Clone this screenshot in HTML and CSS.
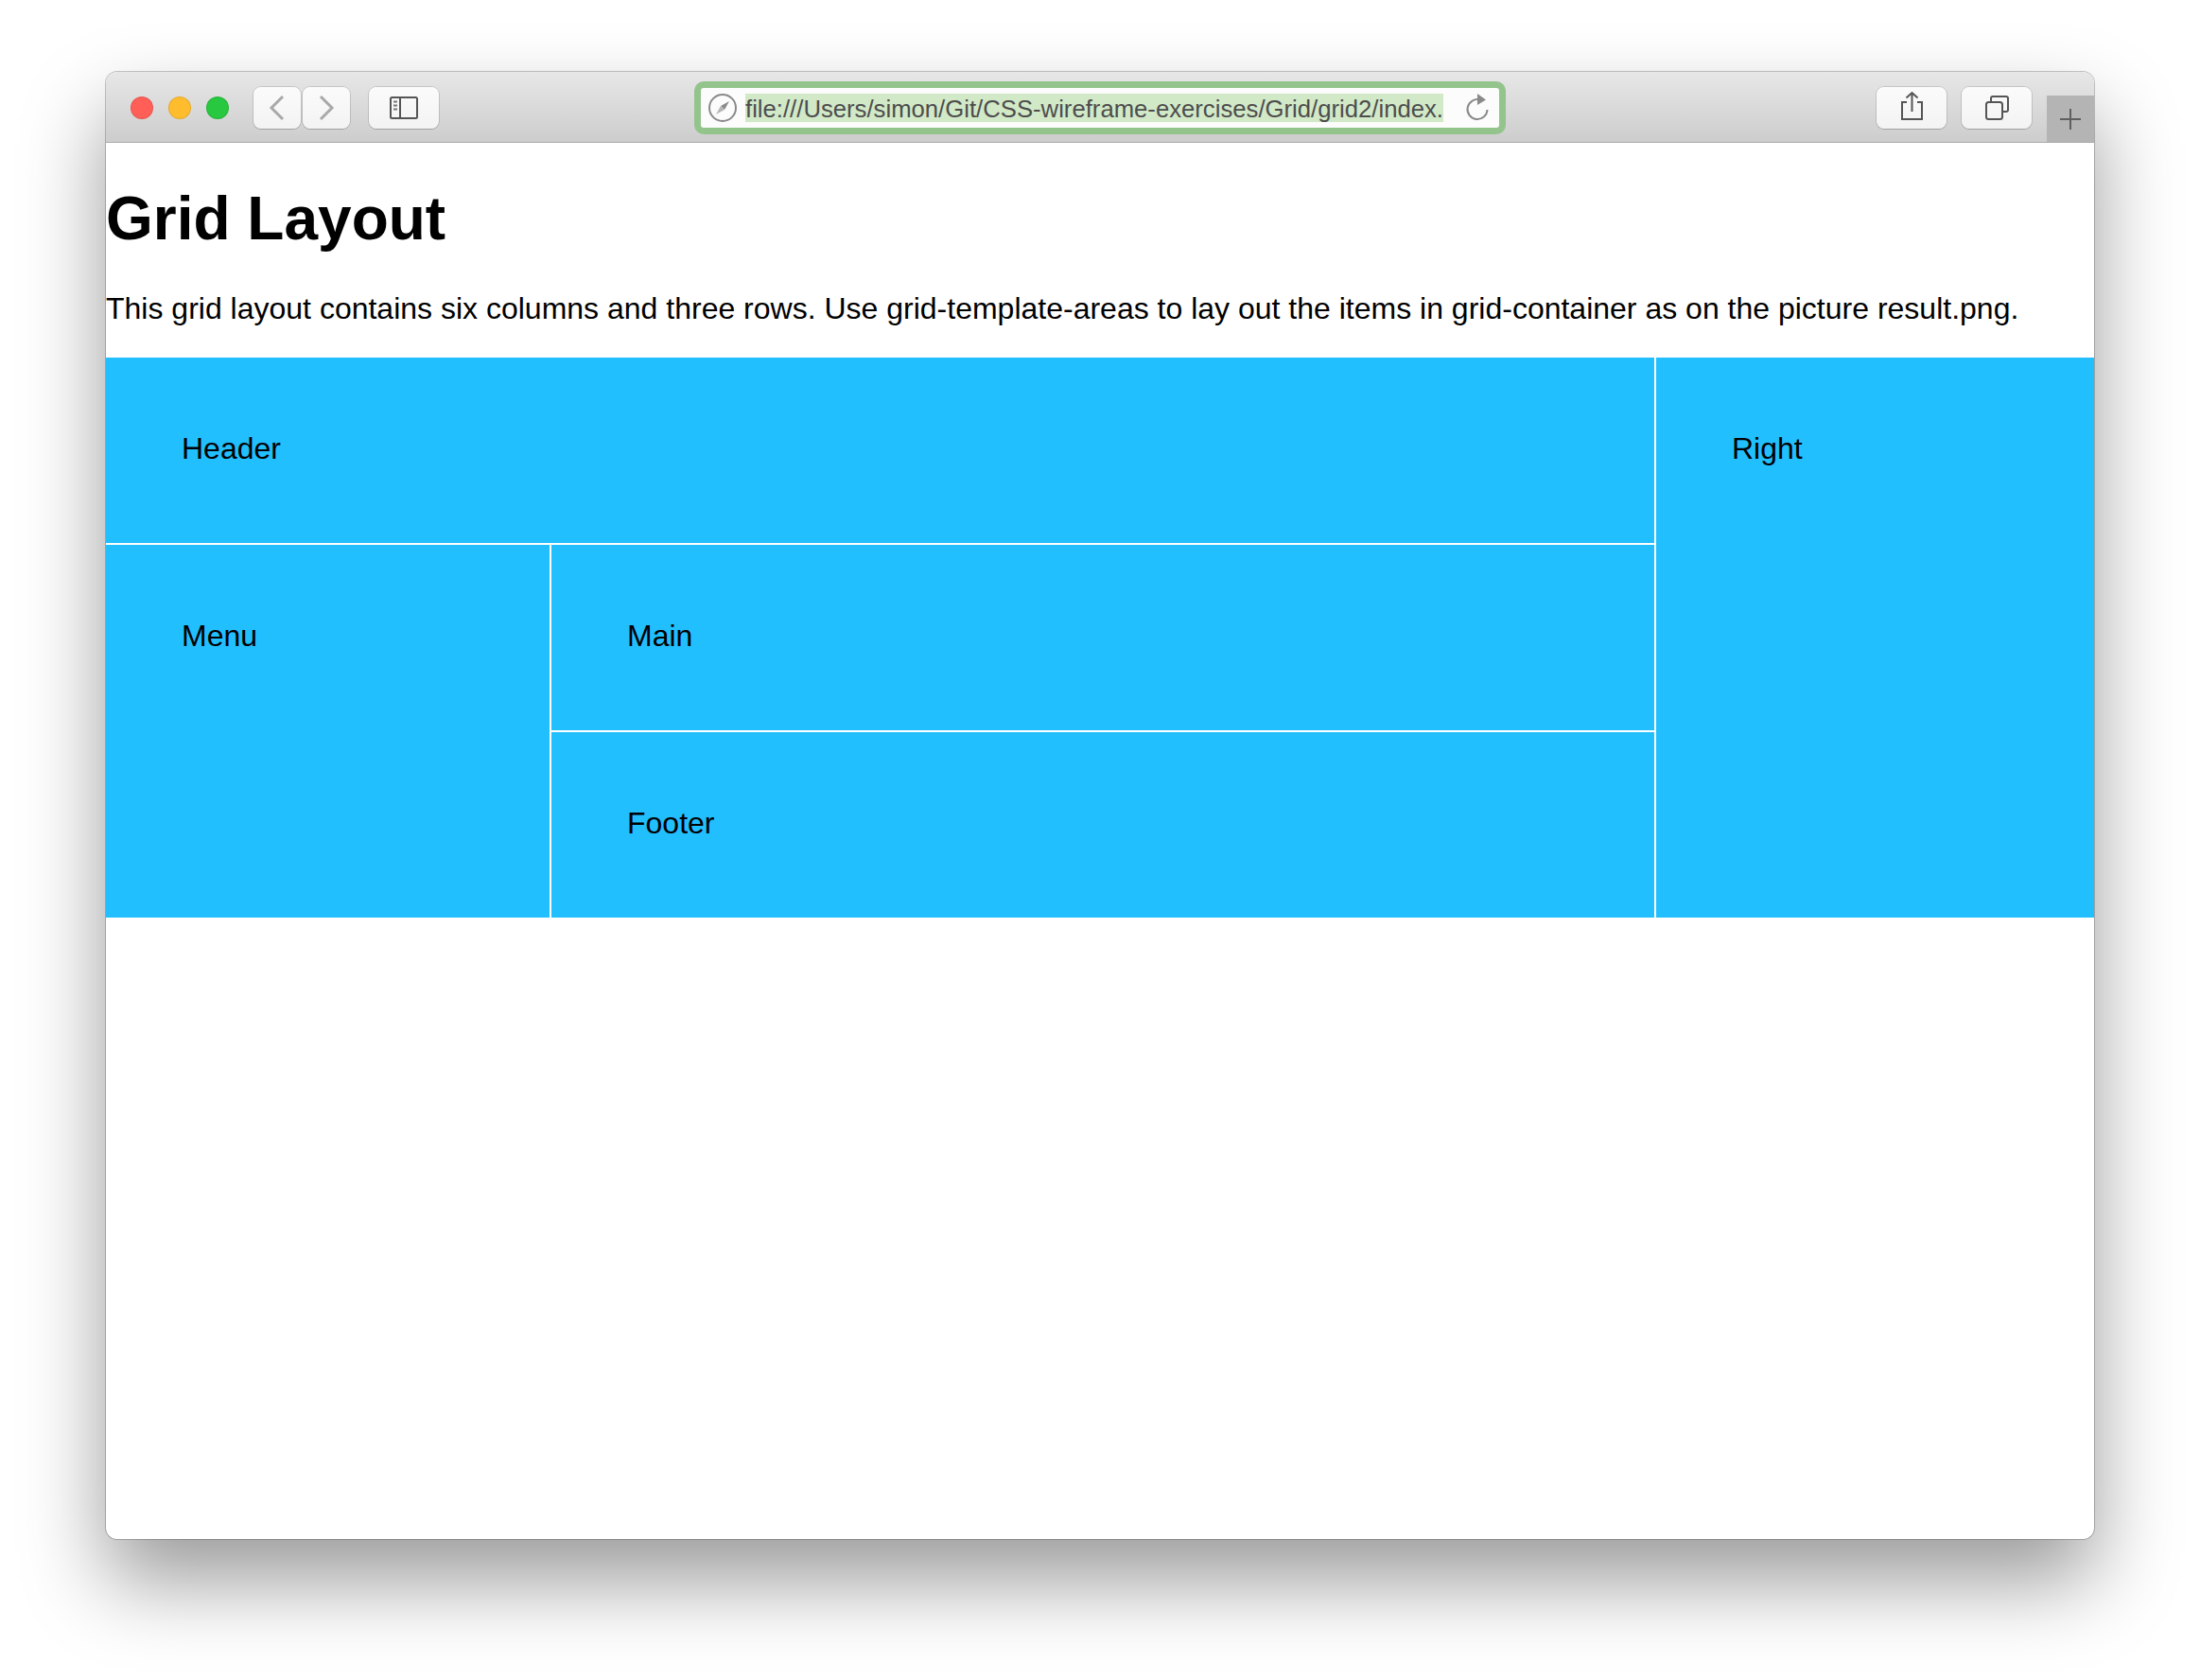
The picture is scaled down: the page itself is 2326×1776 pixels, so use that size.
FILE: index.html
```html
<!DOCTYPE html>
<html lang="en">
<head>
    <meta charset="UTF-8">
    <title>Grid Layout</title>
    <link rel="stylesheet" href="styles.css">
</head>

<body>

    <div class="window">

        <!-- Safari toolbar -->
        <div class="toolbar">
            <div class="lights">
                <span class="light red"></span>
                <span class="light yellow"></span>
                <span class="light green"></span>
            </div>

            <div class="nav-buttons">
                <div class="tool-button nav-button">
                    <svg width="50" height="44" viewBox="0 0 50 44"><path class="chevron" d="M31 10 L19 22 L31 34"/></svg>
                </div>
                <div class="tool-button nav-button">
                    <svg width="50" height="44" viewBox="0 0 50 44"><path class="chevron" d="M19 10 L31 22 L19 34"/></svg>
                </div>
            </div>

            <div class="tool-button wide-button sidebar-button">
                <svg width="74" height="44" viewBox="0 0 74 44">
                    <rect class="glyph" x="23" y="11" width="28" height="22" rx="1.5"/>
                    <path class="glyph" d="M33 11 V33"/>
                    <path class="glyph-dots" d="M26 15.5 H30 M26 19.5 H30 M26 23.5 H30"/>
                </svg>
            </div>

            <div class="address-bar">
                <svg class="compass" width="32" height="32" viewBox="0 0 32 32">
                    <circle cx="16" cy="16" r="14" fill="none" stroke="#8a8a8a" stroke-width="2"/>
                    <path d="M23 9 L18 18 L14 14 Z" fill="#8a8a8a"/>
                    <path d="M9 23 L14 14 L18 18 Z" fill="#b5b5b5"/>
                </svg>
                <div class="url">file:///Users/simon/Git/CSS-wireframe-exercises/Grid/grid2/index.</div>
                <svg class="reload" width="26" height="30" viewBox="0 0 26 30">
                    <path d="M16 6.5 A10.5 10.5 0 1 0 23.5 17" fill="none" stroke="#8a8a8a" stroke-width="2"/>
                    <path d="M13 0 L22 6.5 L13 12 Z" fill="#8a8a8a"/>
                </svg>
            </div>

            <div class="tool-button wide-button share-button">
                <svg width="74" height="44" viewBox="0 0 74 44">
                    <path class="glyph" d="M32 16 H27 V34 H48 V16 H43"/>
                    <path class="glyph" d="M37.500 6 V26 M31.500 11.500 L37.500 6 L43.500 11.500"/>
                </svg>
            </div>
            <div class="tool-button wide-button tabs-button">
                <svg width="74" height="44" viewBox="0 0 74 44">
                    <rect class="glyph" x="26" y="16" width="17" height="18" rx="2.500"/>
                    <path class="glyph" d="M31 15 V12 A2 2 0 0 1 33 10 H47 A2 2 0 0 1 49 12 V24 A2 2 0 0 1 47 26 H44"/>
                </svg>
            </div>

            <div class="new-tab">
                <svg width="24" height="24" viewBox="0 0 24 24"><path d="M1 12 H23 M12 1 V23" stroke="#5f5f5f" stroke-width="2"/></svg>
            </div>
        </div>

        <!-- Page content -->
        <div class="page">
            <h1>Grid Layout</h1>
            <p>This grid layout contains six columns and three rows. Use grid-template-areas to lay out the items in grid-container as on the picture result.png.</p>

            <div class="grid-container">
                <div class="item header">Header</div>
                <div class="item menu">Menu</div>
                <div class="item main">Main</div>
                <div class="item footer">Footer</div>
                <div class="item right">Right</div>
            </div>
        </div>

    </div>

</body>
</html>
```

FILE: styles.css
```css
html, body {
    margin: 0;
    padding: 0;
    background: #ffffff;
}

body {
    padding: 76px 112px 148px;
    height: 1776px;
    box-sizing: border-box;
    overflow: hidden;
}

/* Browser window */
.window {
    height: 1551px;
    background: #ffffff;
    border-radius: 12px;
    overflow: hidden;
    box-shadow: 0 0 0 1px rgba(0, 0, 0, 0.22), 0 44px 88px rgba(0, 0, 0, 0.4);
}

/* Toolbar */
.toolbar {
    display: flex;
    align-items: flex-start;
    height: 75px;
    box-sizing: border-box;
    padding-top: 16px;
    padding-left: 26px;
    background: linear-gradient(#e7e7e7, #cdcdcd);
    border-bottom: 1px solid #ababab;
}

.lights {
    display: flex;
    gap: 16px;
    padding-top: 10px;
}

.light {
    width: 24px;
    height: 24px;
    box-sizing: border-box;
    border-radius: 50%;
    border: 1px solid rgba(0, 0, 0, 0.1);
}

.red { background: #ff5f57; }
.yellow { background: #ffbd2e; }
.green { background: #28c840; }

.tool-button {
    height: 44px;
    box-sizing: border-box;
    background: linear-gradient(#fbfbfb, #f3f3f3);
    border-radius: 8px;
    box-shadow: 0 0 0 1px rgba(0, 0, 0, 0.12), 0 1px 0 rgba(0, 0, 0, 0.12);
}

.tool-button svg {
    display: block;
}

.nav-buttons {
    display: flex;
    gap: 2px;
    margin-left: 26px;
}

.nav-button {
    width: 50px;
}

.wide-button {
    width: 74px;
}

.sidebar-button {
    margin-left: 20px;
}

.chevron {
    fill: none;
    stroke: #a9a9a9;
    stroke-width: 3;
}

.glyph {
    fill: none;
    stroke: #555555;
    stroke-width: 2;
}

.glyph-dots {
    fill: none;
    stroke: #777777;
    stroke-width: 2;
}

/* Address bar */
.address-bar {
    display: flex;
    align-items: center;
    width: 859px;
    height: 56px;
    box-sizing: border-box;
    margin-top: -6px;
    margin-left: 270px;
    padding-left: 7px;
    background: #fcfcfc;
    border: 7px solid #93c48b;
    border-radius: 10px;
}

.compass {
    flex: none;
}

.url {
    width: 738px;
    height: 30px;
    margin-left: 8px;
    overflow: hidden;
    white-space: nowrap;
    background: #d2e9c8;
    font-family: "Liberation Sans", Arial, sans-serif;
    font-size: 25.7px;
    line-height: 32px;
    color: #4d4d4d;
}

.reload {
    flex: none;
    margin-left: 23px;
}

.share-button {
    margin-left: 392px;
}

.tabs-button {
    margin-left: 16px;
}

.new-tab {
    display: flex;
    align-items: center;
    justify-content: center;
    width: 50px;
    height: 49px;
    margin-top: 9px;
    margin-left: 16px;
    background: #b4b4b4;
}

/* Page content */
.page {
    font-family: "Liberation Sans", Arial, sans-serif;
    font-size: 32px;
    line-height: 37px;
    color: #000000;
}

h1 {
    margin: 0;
    padding-top: 43px;
    font-size: 64px;
    line-height: 74px;
    font-weight: bold;
}

p {
    margin: 0;
    padding-top: 40px;
    padding-bottom: 33px;
}

.grid-container {
    display: grid;
    grid-template-columns: 469px 1166px 463px;
    grid-template-rows: 196px 196px 196px;
    gap: 2px;
    grid-template-areas:
        "header header right"
        "menu main right"
        "menu footer right";
}

.item {
    background: #22bfff;
    padding: 78px 80px;
    box-sizing: border-box;
}

.header { grid-area: header; }
.menu { grid-area: menu; }
.main { grid-area: main; }
.footer { grid-area: footer; }
.right { grid-area: right; }
```
